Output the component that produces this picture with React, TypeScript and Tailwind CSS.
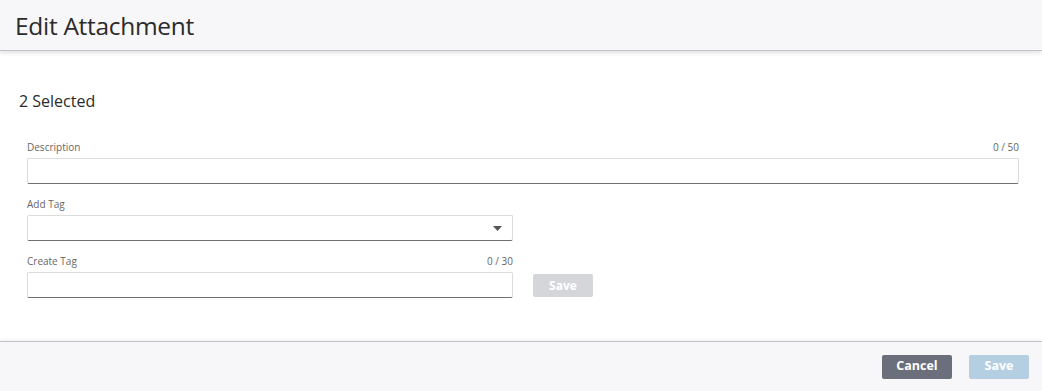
export default function App() {
  const font = { fontFamily: '"Open Sans", "Liberation Sans", sans-serif' };

  return (
    <div className="flex h-[391px] w-[1042px] flex-col bg-white text-[#333]" style={font}>
      <header className="relative z-10 flex h-[51px] items-center border-b border-[#c4c4c8] bg-[#f7f7f9] pl-[15px] shadow-[0_2px_4px_rgba(0,0,0,0.12)]">
        <h1 className="mt-[2px] text-[24.5px] leading-none text-[#2b2b2b] tracking-[-0.3px]">Edit Attachment</h1>
      </header>

      <main className="flex-1 pt-[40px] pl-[19px] pr-[23px]">
        <h2 className="text-[16px] leading-[20px] text-[#2b2b2b]">2 Selected</h2>

        <div className="mt-[29px] pl-[8px]">
          <div className="flex items-end justify-between text-[10px] leading-[14px] text-[#666]">
            <span>Description</span>
            <span>0 / 50</span>
          </div>
          <input
            type="text"
            className="mt-[4px] block h-[26px] w-full rounded-[2px] border border-[#dcdcdc] border-b-[#6f6f6f] bg-white outline-none"
          />

          <div className="mt-[13px] text-[10px] leading-[14px] text-[#666]">Add Tag</div>
          <div className="mt-[4px] flex h-[26px] w-[486px] items-center justify-end rounded-[2px] border border-[#dcdcdc] border-b-[#6f6f6f] bg-white pr-[10px]">
            <svg width="9" height="5" viewBox="0 0 9 5">
              <path d="M0 0h9L4.5 5z" fill="#555" />
            </svg>
          </div>

          <div className="mt-[13px] flex w-[486px] items-end justify-between text-[10px] leading-[14px] text-[#666]">
            <span>Create Tag</span>
            <span>0 / 30</span>
          </div>
          <div className="mt-[4px] flex items-start gap-[20px]">
            <input
              type="text"
              className="block h-[26px] w-[486px] rounded-[2px] border border-[#dcdcdc] border-b-[#6f6f6f] bg-white outline-none"
            />
            <button className="mt-[2px] h-[23px] w-[60px] rounded-[2px] bg-[#d5d6da] text-[12px] font-bold text-white">
              Save
            </button>
          </div>
        </div>
      </main>

      <footer className="flex h-[50px] items-center justify-end gap-[17px] border-t border-[#c4c4c8] bg-[#f7f7f9] pr-[13px] shadow-[0_-1px_3px_rgba(0,0,0,0.08)]">
        <button className="h-[24px] w-[70px] rounded-[2px] bg-[#6b6f7b] text-[12.5px] font-bold text-white">
          Cancel
        </button>
        <button className="h-[24px] w-[60px] rounded-[2px] bg-[#b3cfe1] text-[12.5px] font-bold text-white">
          Save
        </button>
      </footer>
    </div>
  );
}
